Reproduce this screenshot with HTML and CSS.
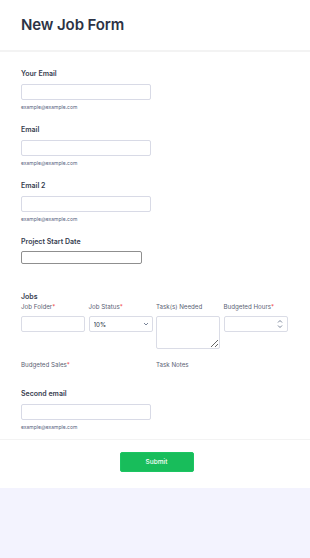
FILE: index.html
```html
<!DOCTYPE html>
<html lang="en">
<head>
    <meta charset="UTF-8">
    <meta name="viewport" content="width=device-width, initial-scale=1.0">
    <title>New Job Form</title>
    <link rel="stylesheet" href="styles.css">
</head>
<body>
    <form class="form-card">
        <div class="form-header">
            <h1>New Job Form</h1>
        </div>

        <div class="form-body">
            <div class="field">
                <label class="field-label">Your Email</label>
                <input class="text-input" type="email">
                <span class="sublabel">example@example.com</span>
            </div>

            <div class="field">
                <label class="field-label">Email</label>
                <input class="text-input" type="email">
                <span class="sublabel">example@example.com</span>
            </div>

            <div class="field">
                <label class="field-label">Email 2</label>
                <input class="text-input" type="email">
                <span class="sublabel">example@example.com</span>
            </div>

            <div class="field field-date">
                <label class="field-label">Project Start Date</label>
                <input class="date-input" type="text">
            </div>

            <div class="field field-jobs">
                <label class="field-label">Jobs</label>
                <div class="jobs-grid">
                    <div class="job-col">
                        <span class="col-label">Job Folder<span class="req">*</span></span>
                        <input class="cell-input" type="text">
                    </div>
                    <div class="job-col">
                        <span class="col-label">Job Status<span class="req">*</span></span>
                        <div class="control-wrap">
                            <select class="cell-input cell-select">
                                <option>10%</option>
                            </select>
                            <svg class="chevron" width="6" height="4" viewBox="0 0 6 4"><path d="M1 1l2 2 2-2" fill="none" stroke="#57647e" stroke-width="0.8"/></svg>
                        </div>
                    </div>
                    <div class="job-col">
                        <span class="col-label">Task(s) Needed</span>
                        <textarea class="cell-input cell-area"></textarea>
                    </div>
                    <div class="job-col">
                        <span class="col-label">Budgeted Hours<span class="req">*</span></span>
                        <div class="control-wrap">
                            <input class="cell-input" type="text">
                            <svg class="spinner" width="6" height="10" viewBox="0 0 6 10"><path d="M1 3.5l2-2 2 2M1 6.5l2 2 2-2" fill="none" stroke="#57647e" stroke-width="0.8"/></svg>
                        </div>
                    </div>
                    <div class="job-col">
                        <span class="col-label">Budgeted Sales<span class="req">*</span></span>
                    </div>
                    <div class="job-col"></div>
                    <div class="job-col">
                        <span class="col-label">Task Notes</span>
                    </div>
                </div>
            </div>

            <div class="field field-last">
                <label class="field-label">Second email</label>
                <input class="text-input" type="email">
                <span class="sublabel">example@example.com</span>
            </div>
        </div>

        <div class="form-footer">
            <button class="submit-btn" type="button">Submit</button>
        </div>
    </form>
</body>
</html>
```

FILE: styles.css
```css
body {
    margin: 0;
    background-color: #f3f3fe;
    font-family: Inter, "Noto Sans", sans-serif;
    color: #2c3345;
}

.form-card {
    background-color: #fff;
    height: 488px;
}

.form-header {
    height: 52px;
    padding: 0 21px 2px;
    border-bottom: 2px solid #f3f3f3;
    box-sizing: border-box;
    display: flex;
    align-items: center;
}

.form-header h1 {
    margin: 0;
    font-size: 15px;
    font-weight: 600;
    letter-spacing: -0.1px;
}

.form-body {
    padding: 17px 21px 0;
}

.field {
    display: flex;
    flex-direction: column;
    align-items: flex-start;
    margin-bottom: 15px;
}

.field-last {
    margin-bottom: 0;
}

.field-label {
    font-size: 7px;
    line-height: 10px;
    font-weight: 600;
    color: #363d4f;
    margin-bottom: 5px;
}

.text-input {
    width: 130px;
    height: 16px;
    box-sizing: border-box;
    border: 1px solid #d8dae6;
    border-radius: 2px;
    margin: 0;
    padding: 0 4px;
}

.sublabel {
    margin-top: 4px;
    font-size: 5px;
    line-height: 6px;
    color: #57647e;
}

.field-date {
    margin-bottom: 28px;
}

.field-date .field-label {
    margin-bottom: 4px;
}

.date-input {
    width: 121px;
    height: 13px;
    box-sizing: border-box;
    border: 1px solid #8f8f8f;
    border-radius: 2px;
    margin: 0;
    padding: 0 3px;
}

.field-jobs .field-label {
    margin-bottom: 0;
}

.jobs-grid {
    display: grid;
    grid-template-columns: repeat(4, 64px);
    column-gap: 3.5px;
    row-gap: 11px;
}

.job-col {
    display: flex;
    flex-direction: column;
}

.col-label {
    font-size: 6.2px;
    line-height: 10px;
    color: #5a6274;
    margin-bottom: 4px;
    white-space: nowrap;
}

.req {
    color: #f23a3c;
}

.cell-input {
    display: block;
    width: 64px;
    height: 16px;
    box-sizing: border-box;
    border: 1px solid #dadce6;
    border-radius: 2px;
    margin: 0;
    padding: 0 4px;
    background-color: #fff;
    font-family: Inter, sans-serif;
    font-size: 6.2px;
    color: #2c3345;
}

.control-wrap {
    position: relative;
    display: flex;
}

.cell-select {
    appearance: none;
    outline: none;
}

.chevron {
    position: absolute;
    right: 4px;
    top: 6px;
}

.spinner {
    position: absolute;
    right: 5px;
    top: 3px;
}

.cell-area {
    height: 33px;
    padding: 3px;
}

.form-footer {
    margin-top: 9px;
    border-top: 1px solid #f3f3f3;
    display: flex;
    justify-content: center;
    padding-top: 12px;
}

.submit-btn {
    width: 74px;
    height: 20px;
    background-color: #18bd5b;
    border: 1px solid #1cc562;
    border-radius: 2px;
    color: #fff;
    font-family: Inter, sans-serif;
    font-size: 6.5px;
    font-weight: 500;
    cursor: pointer;
    margin-left: 3px;
}
```
